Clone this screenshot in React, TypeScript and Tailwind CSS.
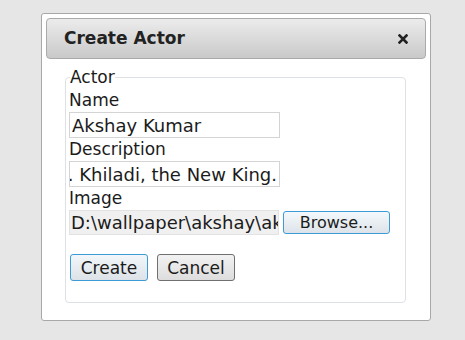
import React from "react";

const font = { fontFamily: '"DejaVu Sans", Verdana, sans-serif' };

function CloseIcon() {
  return (
    <svg width="10" height="10" viewBox="0 0 10 10" className="text-[#222]">
      <path d="M1.5 1.5l7 7M8.5 1.5l-7 7" stroke="currentColor" strokeWidth={2.6} strokeLinecap="square" />
    </svg>
  );
}

export default function App() {
  return (
    <div
      className="min-h-screen bg-[#e6e6e6] pl-[41px] pt-[13px] text-[17px] text-[#1b1b1b]"
      style={font}
    >
      <div className="h-[308px] w-[390px] rounded-[3px] border border-[#a8a8a8] bg-white p-[4px]">
        <div className="flex h-[41px] items-center justify-between rounded-[4px] border border-[#aaaaaa] bg-gradient-to-b from-[#ececec] to-[#c9c9c9] pl-[17px] pr-[17px]">
          <span className="text-[17px] font-bold text-[#222]">Create Actor</span>
          <CloseIcon />
        </div>

        <fieldset className="ml-[19px] mt-[9px] h-[235px] w-[341px] rounded-[4px] border border-[#dde1e5] pl-[3px]">
          <legend className="ml-[1px] leading-[18px]">Actor</legend>

          <div className="pt-[3px] leading-[23px]">Name</div>
          <div className="flex h-[26px] w-[211px] items-center overflow-hidden border border-[#d4d4d4] px-[2px] text-[18px] whitespace-nowrap">
            Akshay Kumar
          </div>

          <div className="leading-[23px]">Description</div>
          <div className="flex h-[26px] w-[211px] items-center justify-end overflow-hidden border border-[#d4d4d4] px-[2px] text-[18px] whitespace-nowrap">
            a.k.a. Khiladi, the New King.
          </div>

          <div className="leading-[23px]">Image</div>
          <div className="flex items-center gap-[4px]">
            <div className="flex h-[25px] w-[210px] items-center overflow-hidden border border-[#e2e2e2] bg-[#f0f0f0] px-[1px] text-[18px] whitespace-nowrap">
              D:\wallpaper\akshay\akshay.jpg
            </div>
            <button className="h-[23px] w-[107px] rounded-[3px] border border-[#3c9bd6] bg-gradient-to-b from-[#f4f9fd] to-[#dde3e8] text-[16px] leading-[20px]">
              Browse...
            </button>
          </div>

          <div className="mt-[19px] flex gap-[9px] pl-[1px]">
            <button className="h-[27px] w-[78px] rounded-[3px] border border-[#3c9bd6] bg-gradient-to-b from-[#f3f7fa] to-[#dce2e7] leading-[22px]">
              Create
            </button>
            <button className="h-[27px] w-[78px] rounded-[3px] border border-[#707070] bg-gradient-to-b from-[#f2f2f2] to-[#dddddd] leading-[22px]">
              Cancel
            </button>
          </div>
        </fieldset>
      </div>
    </div>
  );
}
